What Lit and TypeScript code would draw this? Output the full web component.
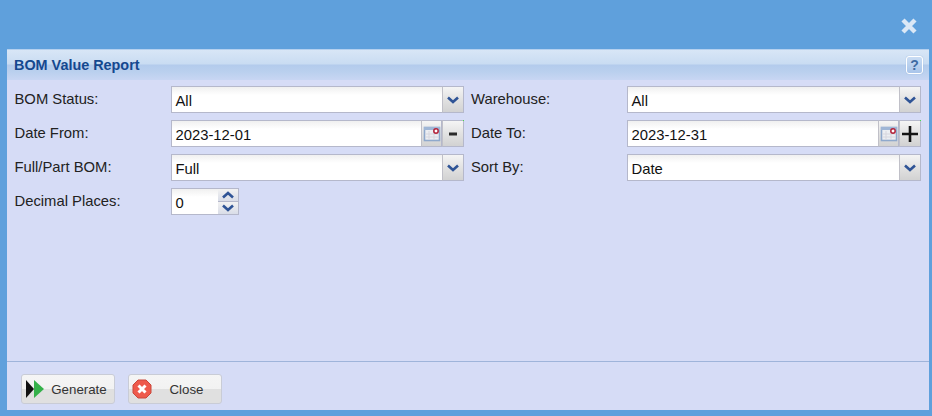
import { LitElement, html, css, svg } from "lit";
import { customElement } from "lit/decorators.js";

const chevron = (down: boolean) => svg`<svg class="chev" width="14" height="10" viewBox="0 0 14 10"><path d="${down ? "M2 2.5 L7 7 L12 2.5" : "M2 7.5 L7 3 L12 7.5"}" fill="none" stroke="#2f5496" stroke-width="2.6"/></svg>`;

const calendar = svg`<svg width="18" height="16" viewBox="0 0 18 16"><rect x="1.5" y="1.5" width="15" height="13" fill="#eceef2" stroke="#8fa9cc" stroke-width="1.6"/><rect x="1" y="1" width="16" height="3" fill="#9fb6d6"/><path d="M6 5v9M11 5v9M2 8h14M2 11h14" stroke="#d6d6de" stroke-width="1"/><circle cx="13" cy="5" r="2.2" fill="#fff" stroke="#b3233a" stroke-width="1.5"/></svg>`;

const minus = svg`<svg width="9" height="4" viewBox="0 0 9 4"><rect x="0" y="0.5" width="8" height="3" fill="#2a2a2a"/></svg>`;
const plus = svg`<svg width="16" height="16" viewBox="0 0 16 16"><path d="M8 0v16M0 8h16" stroke="#141414" stroke-width="2.6"/></svg>`;

@customElement("app-root")
export class AppRoot extends LitElement {
  static styles = css`
    :host { display: block; width: 932px; height: 416px; background: #5fa0dc; font-family: "Liberation Sans", Arial, sans-serif; overflow: hidden; }
    .top { height: 49px; display: flex; justify-content: flex-end; align-items: flex-end; padding-right: 14px; box-sizing: border-box; }
    .x { width: 18px; height: 18px; margin-bottom: 14px; display: block; }
    .panel { margin: 0 3px 0 7px; height: 361px; display: flex; flex-direction: column; background: #d6dcf6; border-top: 1px solid #b4d0ef; box-sizing: border-box; }
    .head { height: 30px; flex: none; display: flex; align-items: center; justify-content: space-between; padding: 0 6px 0 7px; box-sizing: border-box;
      background: linear-gradient(#d8e6f6 0, #c9dcf2 14px, #b3cbec 15px, #bad0ee 22px, #c8d6f3 30px); }
    .title { font-size: 14.4px; font-weight: bold; color: #15488f; }
    .help { width: 17px; height: 18px; box-sizing: border-box; border: 1px solid #fff; border-radius: 3px; background: linear-gradient(#c9dcf3, #a9c5ea); color: #3f6ca3; font-size: 14px; font-weight: bold; line-height: 16px; text-align: center; box-shadow: 0 0 1px #7fa3cf; }
    .form { flex: 1; padding: 6px 0 0 8px; display: grid; grid-template-columns: 156px 293px 163px 294px; grid-auto-rows: 27px; row-gap: 7px; align-content: start; }
    .label { font-size: 14.8px; color: #222; line-height: 26px; margin-left: -0.5px; }
    .label.r { padding-left: 7.5px; }
    .f { display: flex; height: 27px; box-sizing: border-box; position: relative; }
    .input { flex: 1; min-width: 0; box-sizing: border-box; border: 1px solid #b5b8cb; border-right: none; background: linear-gradient(#f0f0f0, #fff 8px); font-size: 14.8px; color: #111; padding: 1px 0 0 3.5px; line-height: 26px; }
    .btn { flex: none; width: 22px; box-sizing: border-box; border: 1px solid #b5b8cb; border-left: 1px solid #c0c0c8; background: linear-gradient(#f5f5f5, #e2e2e2 50%, #d2d2d2); display: flex; align-items: center; justify-content: center; }
    .cal { width: 21px; }
    .dot { position: absolute; right: 0; top: 0; width: 1px; height: 1px; background: #45e04a; }
    .spin { display: flex; width: 68px; height: 27px; }
    .spinbtns { width: 21px; flex: none; display: flex; flex-direction: column; box-sizing: border-box; border: 1px solid #b5b8cb; border-left: none; background: #dfe3ee; }
    .spinbtns > div { flex: 1; display: flex; align-items: center; justify-content: center; background: linear-gradient(#f2f2f2, #d9dde8); }
    .spinbtns > div + div { border-top: 1px solid #b5b8cb; }
    .spin .input { flex: none; width: 47px; }
    .foot { height: 49px; flex: none; border-top: 1px solid #9fb4da; padding: 12px 0 0 14px; display: flex; gap: 13px; box-sizing: border-box; }
    .act { width: 94px; height: 30px; box-sizing: border-box; border: 1px solid #c9ccd6; border-radius: 3px; background: linear-gradient(#f5f5f5 0, #f2f2f2 50%, #e0e0e0 51%, #e0e0e0); display: flex; align-items: center; font-size: 13.3px; color: #333; }
    .act svg { flex: none; margin-left: 2px; }
    .act span { flex: 1; text-align: center; }
    .gen span { padding-right: 4px; }
    .cl svg { margin-left: 3px; }
    .cl span { padding-right: 0; }
  `;

  private select(v: string) {
    return html`<div class="f"><div class="input">${v}</div><div class="btn">${chevron(true)}</div></div>`;
  }
  private date(v: string, sym: unknown) {
    return html`<div class="f"><div class="input">${v}</div><div class="btn cal">${calendar}</div><div class="btn">${sym}</div><i class="dot"></i></div>`;
  }

  render() {
    return html`
      <div class="top">
        <svg class="x" viewBox="0 0 18 18"><path d="M3 3 L15 15 M15 3 L3 15" stroke="#dbe8f6" stroke-width="4.4"/></svg>
      </div>
      <div class="panel">
        <div class="head">
          <div class="title">BOM Value Report</div>
          <div class="help">?</div>
        </div>
        <div class="form">
          <div class="label">BOM Status:</div>${this.select("All")}
          <div class="label r">Warehouse:</div>${this.select("All")}
          <div class="label">Date From:</div>${this.date("2023-12-01", minus)}
          <div class="label r">Date To:</div>${this.date("2023-12-31", plus)}
          <div class="label">Full/Part BOM:</div>${this.select("Full")}
          <div class="label r">Sort By:</div>${this.select("Date")}
          <div class="label">Decimal Places:</div>
          <div class="spin"><div class="input">0</div><div class="spinbtns"><div>${chevron(false)}</div><div>${chevron(true)}</div></div></div>
        </div>
        <div class="foot">
          <div class="act gen">
            <svg width="24" height="20" viewBox="0 0 24 20"><path d="M2 1 L10 10 L2 19 Z" fill="#111"/><path d="M10 1 L20 10 L10 19 Z" fill="#35b14a"/></svg>
            <span>Generate</span>
          </div>
          <div class="act cl">
            <svg width="20" height="20" viewBox="0 0 20 20"><path d="M6 1 H14 L19 6 V14 L14 19 H6 L1 14 V6 Z" fill="#ee5a4c" stroke="#c9483c"/><path d="M6.5 6.5 L13.5 13.5 M13.5 6.5 L6.5 13.5" stroke="#fff" stroke-width="3"/></svg>
            <span>Close</span>
          </div>
        </div>
      </div>
    `;
  }
}
